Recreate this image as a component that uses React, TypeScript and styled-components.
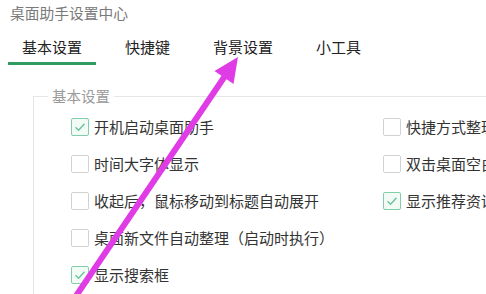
import React from "react";
import styled, { createGlobalStyle } from "styled-components";

const Global = createGlobalStyle`
  html, body { margin: 0; padding: 0; background: #fff; overflow: hidden; }
  body { font-family: "Noto Sans CJK SC", "Noto Sans", sans-serif; }
  #root { width: 486px; height: 294px; overflow: hidden; }
`;

const Page = styled.div`
  position: relative;
  width: 486px;
  height: 294px;
  overflow: hidden;
  background: #fff;
`;

const Title = styled.div`
  height: 26px;
  line-height: 26px;
  padding-left: 10px;
  font-size: 14.75px;
  color: #7a7a7a;
  white-space: nowrap;
`;

const Tabs = styled.div`
  display: flex;
  gap: 15px;
  padding-left: 8px;
  padding-top: 11px;
`;

const Tab = styled.div<{ $active?: boolean }>`
  padding: 0 14px 5px;
  line-height: 20px;
  font-size: 15px;
  color: #222;
  white-space: nowrap;
  border-bottom: 3px solid ${(p) => (p.$active ? "#2f9c62" : "transparent")};
`;

const Group = styled.fieldset`
  margin: 21px 0 0 33px;
  padding: 0 0 0 14px;
  width: 620px;
  height: 400px;
  border: 1px solid #e6e6e6;
  box-sizing: border-box;
`;

const Legend = styled.legend`
  padding: 0 4px;
  line-height: 20px;
  font-size: 14.5px;
  color: #9a9a9a;
`;

const Grid = styled.div`
  display: grid;
  grid-template-columns: 312px 1fr;
  grid-auto-rows: 37px;
  margin-left: 23px;
  padding-top: 2px;
`;

const Item = styled.label`
  display: flex;
  align-items: center;
  gap: 5px;
  font-size: 15px;
  color: #333;
  white-space: nowrap;
`;

const Box = styled.span<{ $checked?: boolean }>`
  flex: none;
  width: 18px;
  height: 18px;
  box-sizing: border-box;
  border-radius: 2px;
  border: 1px solid ${(p) => (p.$checked ? "#82ceaa" : "#d2d2d2")};
  background: ${(p) => (p.$checked ? "#f3fbf7" : "#fff")};
  display: flex;
  align-items: center;
  justify-content: center;
`;

const Overlay = styled.svg`
  position: absolute;
  left: 0;
  top: 0;
  pointer-events: none;
`;

const Check = ({ checked }: { checked?: boolean }) => (
  <Box $checked={checked}>
    {checked && (
      <svg width="14" height="14" viewBox="0 0 14 14">
        <path d="M2.5 7.2 L5.6 10.2 L11.5 3.8" fill="none" stroke="#6cc49a" strokeWidth="1.4" />
      </svg>
    )}
  </Box>
);

const Opt = ({ text, checked }: { text: string; checked?: boolean }) => (
  <Item>
    <Check checked={checked} />
    {text}
  </Item>
);

export default function App() {
  return (
    <Page>
      <Global />
      <Title>桌面助手设置中心</Title>
      <Tabs>
        <Tab $active>基本设置</Tab>
        <Tab>快捷键</Tab>
        <Tab>背景设置</Tab>
        <Tab>小工具</Tab>
      </Tabs>
      <Group>
        <Legend>基本设置</Legend>
        <Grid>
          <Opt text="开机启动桌面助手" checked />
          <Opt text="快捷方式整理" />
          <Opt text="时间大字体显示" />
          <Opt text="双击桌面空白处隐藏图标" />
          <Opt text="收起后，鼠标移动到标题自动展开" />
          <Opt text="显示推荐资讯" checked />
          <Opt text="桌面新文件自动整理（启动时执行）" />
          <div />
          <Opt text="显示搜索框" checked />
        </Grid>
      </Group>
      <Overlay width="486" height="294" viewBox="0 0 486 294">
        <line x1="76" y1="296" x2="225" y2="76" stroke="#e03ce6" strokeWidth="6" />
        <polygon points="238,57 233.5,84 214.5,71" fill="#e03ce6" />
      </Overlay>
    </Page>
  );
}
